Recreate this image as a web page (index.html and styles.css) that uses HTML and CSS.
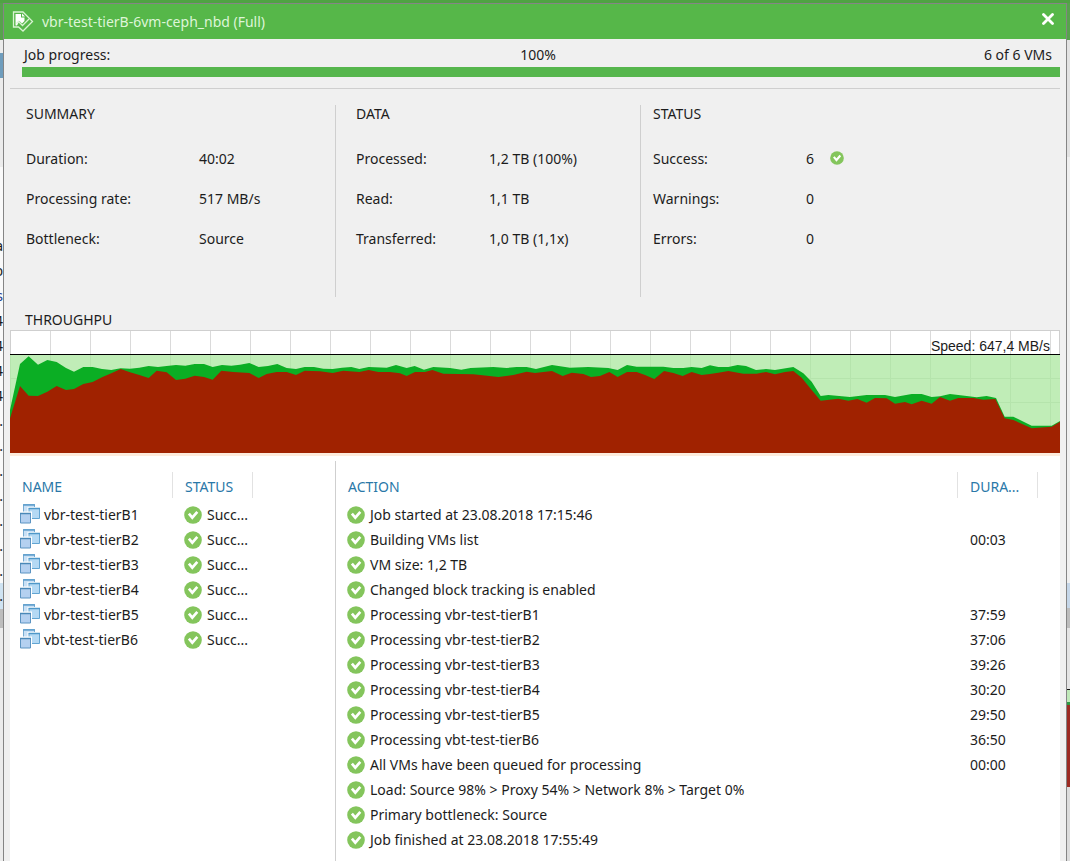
FILE: index.html
```
<!DOCTYPE html>
<html lang="en">
<head>
<meta charset="utf-8">
<title>vbr-test-tierB-6vm-ceph_nbd (Full)</title>
<link rel="stylesheet" href="styles.css">
</head>
<body>
<svg class="defs" aria-hidden="true">
  <symbol id="ok" viewBox="0 0 18 18">
    <circle cx="9" cy="9" r="8.8" fill="#84c55c"/>
    <path d="M4.9 7.6 8.3 11.6 13.3 5.8" fill="none" stroke="#fff" stroke-width="2.7"/>
  </symbol>
  <symbol id="vm" viewBox="0 0 20 20">
    <path d="M3.500 .5h11v9h-11z" fill="#c9e0f5" stroke="#76abd2"/>
    <path d="M3 1h12" stroke="#5f9fcc" stroke-width="1.500"/>
    <path d="M7.500 3h12.500v12.500H7.500z" fill="#fff"/>
    <path d="M9 4.500h10.500v10H9z" fill="#b4d9f4" stroke="#62a5d2"/>
    <path d="M8.500 4.500H20" stroke="#4f98c9" stroke-width="1.500"/>
    <path d="M0 7.500h12V20H0z" fill="#fff"/>
    <path d="M.5 9.500h10v9.500H.5z" fill="#b4d0f0" stroke="#5c94c2"/>
    <path d="M0 9.500h11" stroke="#4a88b8" stroke-width="1.500"/>
  </symbol>
</svg>
<div class="desktop">
  <div class="edge edge-left" aria-hidden="true">
    <span>a</span><span>b</span><span class="blue">s</span><span>4</span><span>4</span><span>4</span><span>4</span><span>7.</span><span>7.</span><span>7.</span><span>7.</span><span>7.</span><span>7.</span><span>7.</span><span>7.</span>
  </div>
  <main class="window">
    <header class="titlebar">
      <svg class="logo" viewBox="0 0 22 22" aria-hidden="true">
        <path d="M1.500 1h9.500l9.500 9.500-9.500 9.500-4.500-4H1.500z" fill="none" stroke="#d9f3d2" stroke-width="1.300"/>
        <path d="M3.500 3H9v3.500h3.500V10l-2.500 2.500-2.500-2.500-2.500 4.500H3.500z" fill="#fff"/>
        <path d="M10 2.500v3h3z" fill="#fff"/>
        <path d="M4.500 12.500l2-2 4 4L17 8" fill="none" stroke="#d9f3d2" stroke-width="1.300"/>
      </svg>
      <h1>vbr-test-tierB-6vm-ceph_nbd (Full)</h1>
      <button class="close" type="button" aria-label="Close">
        <svg viewBox="0 0 12 12"><path d="M1.500 1.500l9 9M10.500 1.500l-9 9" stroke="#fff" stroke-width="2.800" stroke-linecap="round"/></svg>
      </button>
    </header>
    <section class="progress">
      <div class="progress-text"><span>Job progress:</span><span>100%</span><span>6 of 6 VMs</span></div>
      <div class="bar" role="progressbar" aria-label="Job progress" aria-valuenow="100"></div>
    </section>
    <section class="stats">
      <div class="stat summary">
        <h2>SUMMARY</h2>
        <dl><dt>Duration:</dt><dd>40:02</dd><dt>Processing rate:</dt><dd>517 MB/s</dd><dt>Bottleneck:</dt><dd>Source</dd></dl>
      </div>
      <div class="stat data">
        <h2>DATA</h2>
        <dl><dt>Processed:</dt><dd>1,2 TB (100%)</dd><dt>Read:</dt><dd>1,1 TB</dd><dt>Transferred:</dt><dd>1,0 TB (1,1x)</dd></dl>
      </div>
      <div class="stat status">
        <h2>STATUS</h2>
        <dl><dt>Success:</dt><dd>6 <svg class="ok-small" aria-hidden="true"><use href="#ok"/></svg></dd><dt>Warnings:</dt><dd>0</dd><dt>Errors:</dt><dd>0</dd></dl>
      </div>
    </section>
    <section class="throughput">
      <h2>THROUGHPU</h2>
      <div class="chart">
        <svg viewBox="30 60 3150 369" preserveAspectRatio="none" role="img" aria-label="Throughput over time">
          <defs>
            <pattern id="cols" x="30" y="60" width="120" height="369" patternUnits="userSpaceOnUse"><path d="M0 0h3v369H0z" fill="#dadada"/></pattern>
            <pattern id="grid" x="30" y="132" width="120" height="72" patternUnits="userSpaceOnUse"><path d="M0 0h3v72H0zM0 0h120v3H0z" fill="#b5e4ac"/></pattern>
          </defs>
          <path d="M30 60h3150v369H30z" fill="#fff"/>
          <path d="M30 60h3150v72H30z" fill="url(#cols)"/>
          <path d="M30 132h3150v297H30z" fill="#c0edb7"/>
          <path d="M30 132h3150v297H30z" fill="url(#grid)"/>
          <path fill="#0bae24" d="M30 429V300L60 162 86 139 114 164 142 150 170 156 198 174 222 185 250 171 278 171 306 177 334 180 362 175 390 176 418 173 446 168 474 171 500 168 528 165 556 167 584 162 612 162 638 171 666 165 694 167 720 164 748 159 776 171 804 168 832 162 860 174 888 177 914 171 942 171 970 176 998 177 1026 173 1054 171 1078 177 1106 171 1160 173 1188 165 1220 174 1244 168 1272 179 1300 171 1350 174 1384 179 1412 174 1480 171 1520 174 1550 171 1580 171 1608 177 1656 165 1710 173 1765 171 1825 174 1853 180 1881 165 1910 170 1990 170 2020 174 2050 174 2075 171 2105 174 2130 166 2155 171 2185 171 2213 165 2238 168 2268 180 2298 177 2325 180 2380 171 2410 190 2435 215 2462 258 2485 255 2550 261 2600 255 2655 255 2685 261 2735 252 2765 252 2795 261 2820 259 2850 252 2900 258 2930 262 2960 258 2988 264 3014 320 3040 320 3095 347 3155 347 3180 333V429z"/>
          <path fill="#a02200" d="M30 429V325L60 228 86 257 114 258 142 245 170 228 198 240 222 237 250 222 278 216 306 202 334 190 362 177 390 187 418 195 446 204 470 182 500 187 528 210 556 206 584 197 612 201 638 209 664 182 700 186 748 189 776 204 800 192 830 186 860 186 888 195 914 182 960 184 998 189 1030 182 1078 186 1106 180 1135 186 1170 186 1200 190 1220 198 1245 186 1275 186 1297 180 1330 191 1420 193 1495 201 1540 195 1580 185 1605 189 1656 183 1688 198 1715 188 1750 192 1773 201 1800 198 1828 186 1853 201 1881 186 1910 186 1935 195 1963 207 1992 183 2020 189 2048 198 2075 186 2105 195 2130 192 2155 188 2185 183 2230 191 2270 191 2298 186 2325 193 2355 186 2380 183 2405 203 2435 240 2462 272 2515 266 2545 272 2572 267 2600 278 2625 264 2660 265 2685 281 2715 276 2735 283 2765 272 2795 281 2820 261 2850 272 2875 264 2920 264 2950 269 2986 267 3014 325 3040 330 3095 355 3155 350 3180 335V429z"/>
          <path d="M30 132h3150v3H30z" fill="#000"/>
          <path d="M30 60h3150v3H30zM30 60h3v72h-3zM3177 60h3v72h-3z" fill="#cfcfcf"/>
        </svg>
        <span class="speed">Speed: 647,4 MB/s</span>
      </div>
    </section>
    <section class="details">
      <div class="pane vms">
        <table>
          <colgroup><col class="c-name"><col class="c-status"><col></colgroup>
          <thead><tr><th scope="col"><span>NAME</span></th><th scope="col"><span>STATUS</span></th><td></td></tr></thead>
          <tbody>
            <tr><td><svg class="vm"><use href="#vm"/></svg>vbr-test-tierB1</td><td><svg class="ok"><use href="#ok"/></svg>Succ...</td><td></td></tr>
            <tr><td><svg class="vm"><use href="#vm"/></svg>vbr-test-tierB2</td><td><svg class="ok"><use href="#ok"/></svg>Succ...</td><td></td></tr>
            <tr><td><svg class="vm"><use href="#vm"/></svg>vbr-test-tierB3</td><td><svg class="ok"><use href="#ok"/></svg>Succ...</td><td></td></tr>
            <tr><td><svg class="vm"><use href="#vm"/></svg>vbr-test-tierB4</td><td><svg class="ok"><use href="#ok"/></svg>Succ...</td><td></td></tr>
            <tr><td><svg class="vm"><use href="#vm"/></svg>vbr-test-tierB5</td><td><svg class="ok"><use href="#ok"/></svg>Succ...</td><td></td></tr>
            <tr><td><svg class="vm"><use href="#vm"/></svg>vbt-test-tierB6</td><td><svg class="ok"><use href="#ok"/></svg>Succ...</td><td></td></tr>
          </tbody>
        </table>
      </div>
      <div class="pane actions">
        <table>
          <colgroup><col><col class="c-duration"><col class="c-end"></colgroup>
          <thead><tr><th scope="col"><span>ACTION</span></th><th scope="col"><span>DURA...</span></th><td></td></tr></thead>
          <tbody>
            <tr><td><svg class="ok"><use href="#ok"/></svg>Job started at 23.08.2018 17:15:46</td><td></td><td></td></tr>
            <tr><td><svg class="ok"><use href="#ok"/></svg>Building VMs list</td><td>00:03</td><td></td></tr>
            <tr><td><svg class="ok"><use href="#ok"/></svg>VM size: 1,2 TB</td><td></td><td></td></tr>
            <tr><td><svg class="ok"><use href="#ok"/></svg>Changed block tracking is enabled</td><td></td><td></td></tr>
            <tr><td><svg class="ok"><use href="#ok"/></svg>Processing vbr-test-tierB1</td><td>37:59</td><td></td></tr>
            <tr><td><svg class="ok"><use href="#ok"/></svg>Processing vbr-test-tierB2</td><td>37:06</td><td></td></tr>
            <tr><td><svg class="ok"><use href="#ok"/></svg>Processing vbr-test-tierB3</td><td>39:26</td><td></td></tr>
            <tr><td><svg class="ok"><use href="#ok"/></svg>Processing vbr-test-tierB4</td><td>30:20</td><td></td></tr>
            <tr><td><svg class="ok"><use href="#ok"/></svg>Processing vbr-test-tierB5</td><td>29:50</td><td></td></tr>
            <tr><td><svg class="ok"><use href="#ok"/></svg>Processing vbt-test-tierB6</td><td>36:50</td><td></td></tr>
            <tr><td><svg class="ok"><use href="#ok"/></svg>All VMs have been queued for processing</td><td>00:00</td><td></td></tr>
            <tr><td><svg class="ok"><use href="#ok"/></svg>Load: Source 98% &gt; Proxy 54% &gt; Network 8% &gt; Target 0%</td><td></td><td></td></tr>
            <tr><td><svg class="ok"><use href="#ok"/></svg>Primary bottleneck: Source</td><td></td><td></td></tr>
            <tr><td><svg class="ok"><use href="#ok"/></svg>Job finished at 23.08.2018 17:55:49</td><td></td><td></td></tr>
          </tbody>
        </table>
      </div>
    </section>
  </main>
  <div class="edge edge-right" aria-hidden="true"></div>
</div>
</body>
</html>
```
FILE: styles.css
```
* { box-sizing: border-box; }
body {
  margin: 0;
  height: 100vh;
  overflow: hidden;
  font: 14px/20px "Noto Sans", "Open Sans", sans-serif;
  color: #1c1c1c;
}
h1, h2, dl, dd { margin: 0; font-size: inherit; font-weight: 400; }
.defs { position: absolute; width: 0; height: 0; }
.desktop {
  display: grid;
  grid-template-columns: 3px minmax(0, 1fr) 3px;
  min-height: 100vh;
  padding-top: 3px;
  background: #4fa343;
}
.edge { overflow: hidden; }
.edge-left {
  padding-top: 230px;
  background: linear-gradient(#57a34d 0 37px, #ececec 37px 50px, #6f9dbd 50px 75px, #ececec 75px 164px, #fafafa 164px 580px, #cfe3f2 580px 606px, #bdbdbd 606px 625px, #ececec 625px);
}
.edge-left span { display: flex; justify-content: flex-end; height: 25px; line-height: 25px; }
.edge-left .blue { color: #23408f; }
.edge-right {
  background: linear-gradient(#57a34d 0 37px, #e2e2e2 37px 154px, #efefef 154px 580px, #c5d6e8 580px 605px, #bdbdbd 605px 625px, #e4e4e4 625px 686px, #111 686px 687px, #bfe8b8 687px 699px, #2d9a44 699px 702px, #9c2a22 702px 784px, #dcdcdc 784px);
}
.window {
  display: flex;
  flex-direction: column;
  border: 1px solid #858585;
  border-bottom: 0;
  background: #f0f0f0;
}
.titlebar {
  display: flex;
  align-items: center;
  gap: 8px;
  height: 35px;
  padding: 0 12px 0 8px;
  background: #56b749;
  color: #def5d8;
}
.logo { width: 22px; height: 22px; }
.titlebar h1 { flex: 1; }
.close { display: flex; padding: 0 0 6px; border: 0; background: none; }
.close svg { width: 12px; height: 12px; }
.progress {
  margin: 0 6px;
  padding: 6px 0 11px 12px;
  border-bottom: 1px solid #cfcfcf;
}
.progress-text {
  display: grid;
  grid-template-columns: 1fr auto 1fr;
  padding: 0 8px 2px 2px;
}
.progress-text :last-child { text-align: right; }
.bar { height: 10px; background: #56b64d; }
.stats {
  display: grid;
  grid-template-columns: 325fr 305fr 420fr;
  margin: 16px 6px 0;
}
.stat { height: 192px; padding-left: 16px; }
.stat + .stat { border-left: 1px solid #cfcfcf; }
.data { padding-left: 20px; }
.status { padding-left: 12px; }
.stat h2 { padding-bottom: 16px; line-height: 18px; }
.stat dl { display: grid; grid-template-columns: 173px 1fr; grid-auto-rows: 40px; line-height: 40px; }
.data dl { grid-template-columns: 133px 1fr; }
.status dl { grid-template-columns: 153px 1fr; }
.ok-small { width: 14px; height: 14px; margin-left: 12px; vertical-align: -1px; }
.throughput { margin: 13px 6px 0; }
.throughput h2 { padding-left: 15px; }
.chart { position: relative; border-bottom: 3px solid #fdebdc; }
.chart svg { display: block; width: 100%; height: 123px; }
.speed {
  position: absolute;
  top: 6px;
  right: 10px;
  font: 14px/20px "Liberation Sans", Arial, sans-serif;
}
.details {
  display: grid;
  grid-template-columns: 325px minmax(0, 1fr);
  flex: 1;
  margin: 0 6px;
  padding-top: 5px;
  background: #fff;
}
.pane { padding-top: 11px; }
.actions { border-left: 1px solid #cfcfcf; }
table { width: 100%; table-layout: fixed; border-collapse: collapse; }
th, td { height: 25px; padding: 0; text-align: left; font-weight: 400; white-space: nowrap; }
thead th { height: 30px; padding-bottom: 4px; color: #2a78a8; }
th span { display: block; height: 26px; padding-top: 4px; line-height: 22px; border-right: 1px solid #e2e2e2; }
td svg { vertical-align: -4px; }
.c-name { width: 163px; }
.c-status { width: 80px; }
.c-duration { width: 80px; }
.c-end { width: 22px; }
.vms td:first-child { padding-left: 10px; }
.vms th span, .actions th:first-child span { padding-left: 12px; }
.vms td:nth-child(2) { padding-left: 11px; }
.actions td:first-child { padding-left: 11px; }
.actions th:nth-child(2) span, .actions td:nth-child(2) { padding-left: 12px; }
.vm { width: 20px; height: 20px; margin-right: 4px; }
.ok { width: 18px; height: 18px; margin-right: 5px; }
```
